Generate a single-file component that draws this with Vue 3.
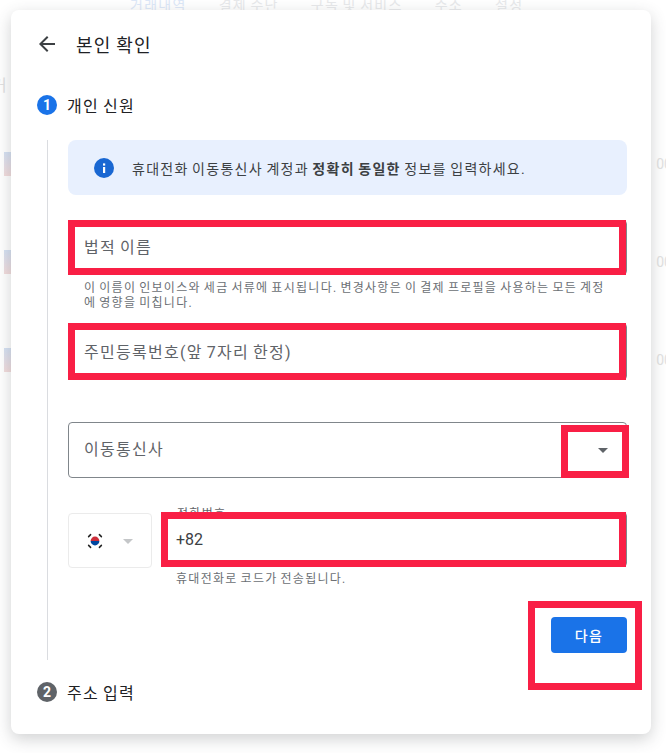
<template>
  <div class="page">
    <div class="backdrop">
      <nav class="nav">
        <span class="nav-on">거래내역</span>
        <span>결제 수단</span>
        <span>구독 및 서비스</span>
        <span>주소</span>
        <span>설정</span>
      </nav>
      <div class="bg-title">거</div>
      <div v-for="n in rows" :key="n" class="bg-row">
        <span class="bg-chip"></span>
        <span class="bg-num">00</span>
      </div>
    </div>

    <div class="card">
      <div class="head">
        <svg class="back" width="24" height="24" viewBox="0 0 24 24">
          <path fill="#3c4043" d="M20 11H7.83l5.59-5.59L12 4l-8 8 8 8 1.41-1.41L7.83 13H20v-2z" />
        </svg>
        <h1>본인 확인</h1>
      </div>

      <div class="step">
        <span class="num">1</span>
        <span>개인 신원</span>
      </div>

      <div class="body">
        <div class="info">
          <svg width="20" height="20" viewBox="0 0 20 20">
            <circle cx="10" cy="10" r="10" fill="#1967d2" />
            <rect x="9" y="9" width="2.2" height="6" fill="#fff" />
            <rect x="9" y="5.4" width="2.2" height="2.2" fill="#fff" />
          </svg>
          <p>휴대전화 이동통신사 계정과 <b>정확히 동일한</b> 정보를 입력하세요.</p>
        </div>

        <div class="field name">
          <span class="ph">법적 이름</span>
          <i class="mark"></i>
        </div>
        <p class="help name-help">이 이름이 인보이스와 세금 서류에 표시됩니다. 변경사항은 이 결제 프로필을 사용하는 모든 계정에 영향을 미칩니다.</p>

        <div class="field rrn">
          <span class="ph">주민등록번호(앞 7자리 한정)</span>
          <i class="mark"></i>
        </div>

        <div class="field carrier">
          <span class="ph">이동통신사</span>
          <span class="caret"></span>
          <i class="mark mark-caret"></i>
        </div>

        <div class="phone">
          <div class="flag-box">
            <svg width="18" height="18" viewBox="0 0 18 18">
              <g stroke="#222" stroke-width="1.5" stroke-linecap="round">
                <path d="M2.6 4.6l2-2M2.6 13.4l2 2M15.4 4.6l-2-2M15.4 13.4l-2 2" />
              </g>
              <path fill="#cd2e3a" d="M4.6 9a4.4 4.4 0 0 1 8.8 0z" />
              <path fill="#0047a0" d="M4.6 9a4.4 4.4 0 0 0 8.8 0z" />
            </svg>
            <span class="caret caret-light"></span>
          </div>
          <div class="field tel">
            <span class="tel-label">전화번호</span>
            <span class="tel-val">+82</span>
            <i class="mark"></i>
          </div>
        </div>
        <p class="help tel-help">휴대전화로 코드가 전송됩니다.</p>

        <div class="actions">
          <button class="next">다음<i class="mark mark-next"></i></button>
        </div>
      </div>

      <div class="step step-two">
        <span class="num num-off">2</span>
        <span>주소 입력</span>
      </div>
    </div>
  </div>
</template>

<script setup>
const rows = [1, 2, 3];
</script>

<style>
html,
body {
  margin: 0;
  background: #fff;
}
</style>

<style scoped>
.page {
  position: relative;
  width: 666px;
  height: 753px;
  overflow: hidden;
  font-family: Roboto, "Noto Sans CJK KR", sans-serif;
  /* hangul in the shot runs 1em wide, spaces stay narrow */
  letter-spacing: 0.08em;
  word-spacing: -0.08em;
  color: #202124;
}

/* faded page behind the dialog */
.backdrop {
  position: absolute;
  inset: 0;
  background: #fff;
}
.nav {
  display: flex;
  height: 14px;
  padding-left: 130px;
  gap: 32px;
  font-size: 14px;
  line-height: 10px;
  color: #e8e9eb;
  overflow: hidden;
}
.nav-on {
  color: #dde8f8;
}
.bg-title {
  height: 24px;
  margin-top: 60px;
  margin-left: -8px;
  font-size: 16px;
  line-height: 24px;
  color: #e0e0e0;
}
.bg-row {
  display: flex;
  justify-content: space-between;
  align-items: center;
  height: 24px;
  margin-top: 54px;
  margin-bottom: -34px;
  padding-bottom: 54px;
}
.bg-chip {
  width: 7px;
  height: 24px;
  margin-left: 4px;
  background: linear-gradient(#d5e1f3, #f3dcdc);
}
.bg-num {
  font-size: 14px;
  letter-spacing: 0;
  color: #e2e2e2;
  margin-right: -6px;
}

.card {
  position: absolute;
  left: 11px;
  top: 10px;
  box-sizing: border-box;
  width: 640px;
  height: 724px;
  padding: 10px 24px 0 26px;
  background: #fff;
  border-radius: 8px;
  box-shadow: 0 5px 16px rgba(60, 64, 67, 0.24);
}

.head {
  display: flex;
  align-items: center;
  height: 48px;
  margin-left: -2px;
}
.back {
  margin-right: 17px;
}
h1 {
  margin: 0;
  font-size: 18px;
  font-weight: 400;
}

.step {
  display: flex;
  align-items: center;
  gap: 10px;
  height: 22px;
  margin-top: 26px;
  font-size: 16px;
}
.num {
  display: flex;
  align-items: center;
  justify-content: center;
  width: 20px;
  height: 20px;
  border-radius: 50%;
  background: #1a73e8;
  color: #fff;
  font-size: 14px;
  font-weight: 700;
  letter-spacing: 0;
}
.num-off {
  background: #5f6368;
}
.step-two {
  margin-top: 21px;
}

.body {
  margin: 24px 0 0 10px;
  padding-left: 20px;
  height: 520px;
  border-left: 1px solid #dadce0;
}

.info {
  display: flex;
  align-items: center;
  gap: 18px;
  height: 55px;
  padding-left: 26px;
  background: #e8f0fe;
  border-radius: 8px;
}
.info p {
  margin: 0;
  font-size: 14px;
  color: #3c4043;
}
.info b {
  font-weight: 700;
}

.field {
  position: relative;
  display: flex;
  align-items: center;
  box-sizing: border-box;
  padding-left: 15px;
  border: 1px solid #80868b;
  border-radius: 4px;
}
.name {
  height: 55px;
  margin-top: 25px;
  padding-bottom: 3px;
}
.rrn {
  height: 57px;
  margin-top: 13px;
  padding-bottom: 2px;
}
.carrier {
  height: 56px;
  margin-top: 42px;
  padding-bottom: 4px;
}
.ph {
  font-size: 16px;
  color: #5f6368;
}
.help {
  margin: 0;
  padding-left: 16px;
  font-size: 12px;
  line-height: 15px;
  color: #6b6f74;
  word-break: break-all;
}
.name-help {
  margin-top: 6px;
  margin-bottom: -1px;
  padding-right: 18px;
}
.tel-help {
  margin-top: 4px;
  padding-left: 108px;
}

.mark {
  position: absolute;
  inset: -1px 0 -1px -1px;
  border: 7px solid #f91f45;
  pointer-events: none;
}
.mark-caret {
  inset: 2px -3px -1px auto;
  width: 68px;
  box-sizing: border-box;
}
.mark-next {
  inset: -16px -15px -37px -23px;
}

.caret {
  position: absolute;
  right: 18px;
  top: 25px;
  border: 5px solid transparent;
  border-top-color: #5f6368;
  border-bottom: 0;
}

.phone {
  display: flex;
  gap: 9px;
  margin-top: 35px;
}
.flag-box {
  position: relative;
  display: flex;
  align-items: center;
  box-sizing: border-box;
  width: 84px;
  height: 55px;
  padding-left: 17px;
  border: 1px solid #ebebeb;
  border-radius: 4px;
}
.caret-light {
  top: 25px;
  border-top-color: #c4c6c8;
}
.tel {
  flex: 1;
  height: 55px;
  margin-top: -1px;
  padding-left: 14px;
}
.tel-label {
  position: absolute;
  left: 14px;
  top: -9px;
  padding: 0 1px;
  background: #fff;
  font-size: 12px;
  color: #5f6368;
}
.tel-val {
  font-size: 16px;
  letter-spacing: 0;
  color: #3c4043;
}

.actions {
  display: flex;
  justify-content: flex-end;
  margin-top: 30px;
}
.next {
  position: relative;
  width: 76px;
  height: 36px;
  padding: 0;
  border: 0;
  border-radius: 4px;
  background: #1a73e8;
  color: #fff;
  font: 500 14px Roboto, "Noto Sans CJK KR", sans-serif;
  letter-spacing: inherit;
}
</style>
